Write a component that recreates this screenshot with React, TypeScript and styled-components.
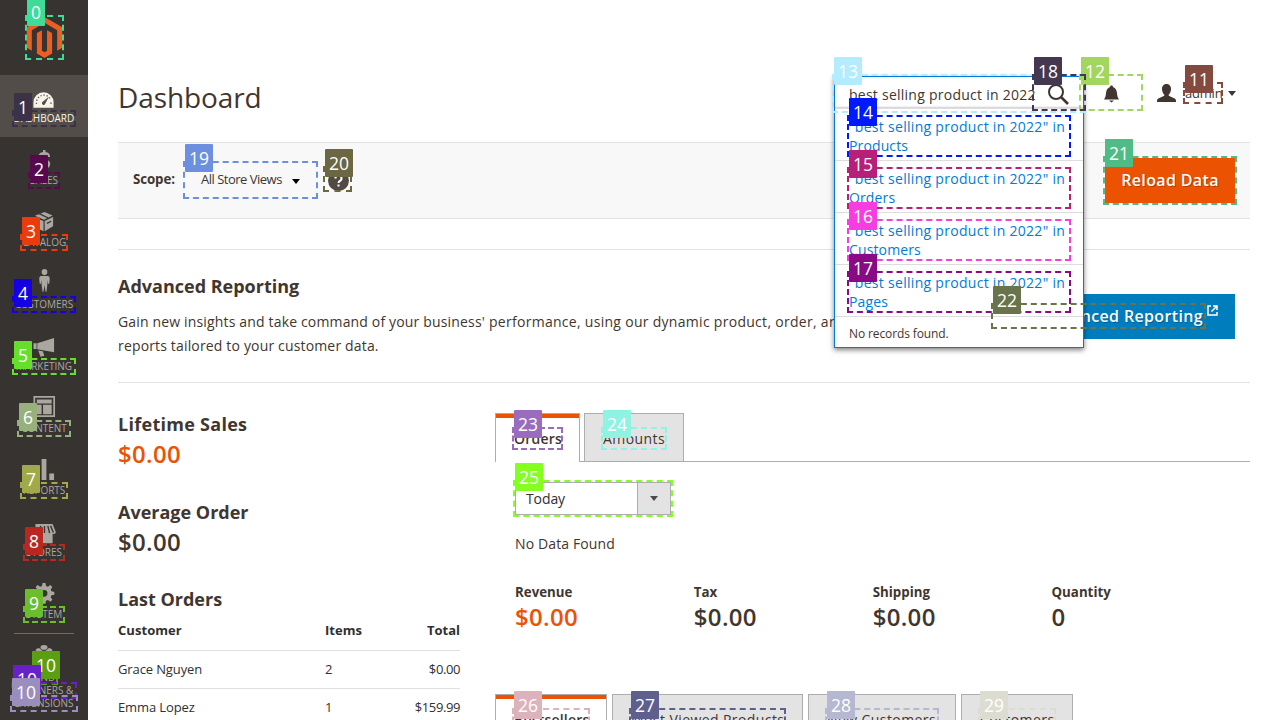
import React from "react";
import styled, { createGlobalStyle } from "styled-components";

const GlobalStyle = createGlobalStyle`
  * { box-sizing: border-box; }
  html, body { margin: 0; height: 720px; overflow: hidden; background: #fff; }
  body { font-family: "Open Sans", "Noto Sans", sans-serif; font-size: 14px; color: #41362f; }
`;

const Page = styled.div`
  position: relative;
  display: flex;
  width: 1280px;
  height: 720px;
  overflow: hidden;
`;

const Sidebar = styled.nav`
  flex: none;
  width: 88px;
  height: 720px;
  background: #373330;
  overflow: hidden;
`;

const LogoLink = styled.div`
  display: flex;
  justify-content: center;
  height: 75px;
  padding: 17px 0 0 1px;
`;

const MenuItem = styled.div<{ $active?: boolean; $lift?: number }>`
  display: flex;
  flex-direction: column;
  align-items: center;
  height: 62px;
  padding-top: ${(p) => 14 - (p.$lift ?? 0)}px;
  background: ${(p) => (p.$active ? "#524d49" : "transparent")};
  color: ${(p) => (p.$active ? "#f7f3eb" : "#aaa6a0")};
  svg { display: block; flex: none; margin-bottom: ${(p) => p.$lift ?? 0}px; fill: currentColor; }
`;

const MenuLabel = styled.span`
  font-size: 10px;
  line-height: 13px;
  text-align: center;
  text-transform: uppercase;
  white-space: pre-line;
`;

const MenuRule = styled.div`
  height: 1px;
  margin: 0 14px;
  background: #736963;
`;

const Main = styled.main`
  width: 1162px;
  padding-left: 30px;
`;

const Header = styled.header`
  display: flex;
  align-items: flex-start;
  height: 142px;
  padding-top: 76px;
`;

const Title = styled.h1`
  flex: 1;
  margin: 0;
  font-size: 28px;
  font-weight: 400;
  line-height: 42px;
  letter-spacing: -0.1px;
`;

const SearchSlot = styled.div`
  position: relative;
  z-index: 2;
  width: 250px;
  height: 33px;
`;

const SearchPanel = styled.div`
  position: absolute;
  top: 0;
  left: 0;
  width: 250px;
  height: 272px;
  border: 1px solid #007bdb;
  background: #fff;
  box-shadow: 0 2px 5px rgba(0, 0, 0, 0.5);
`;

const SearchField = styled.div`
  display: flex;
  align-items: center;
  height: 32px;
  padding: 4px 14px 0;
  border-bottom: 1px solid #ddd;
  box-shadow: inset 0 -2px 2px -1px #ccc;
  letter-spacing: 0.25px;
  white-space: nowrap;
  svg { flex: none; margin-left: auto; }
`;

const Suggestion = styled.div`
  height: 52px;
  padding: 8px 14px 0;
  border-bottom: 1px solid #ddd;
  color: #007bdb;
  line-height: 19px;
  letter-spacing: 0.29px;
`;

const AreaName = styled.span`
  letter-spacing: 0.13px;
`;

const EmptyNote = styled.div`
  padding: 8px 14px 0;
  font-size: 12px;
  line-height: 17px;
  letter-spacing: -0.12px;
`;

const BellSlot = styled.div`
  width: 55px;
  padding: 9px 0 0 19px;
`;

const Account = styled.div`
  display: flex;
  align-items: center;
  width: 111px;
  height: 33px;
  padding-left: 18px;
  font-size: 13px;
  letter-spacing: -0.2px;
  span { margin: 0 7px 0 9px; width: 36px; }
  svg:last-child { margin-top: 2px; }
`;

const ScopeBar = styled.section`
  display: flex;
  align-items: center;
  height: 77px;
  padding: 0 15px;
  border: solid #e3e3e3;
  border-width: 1px 0;
  background: #f8f8f8;
  font-size: 13px;
  b { width: 68px; padding-bottom: 3px; font-size: 13.3px; letter-spacing: -0.1px; }
`;

const ScopeSwitch = styled.div`
  display: flex;
  align-items: center;
  gap: 10px;
  width: 127px;
  padding-bottom: 3px;
  letter-spacing: -0.5px;
  white-space: nowrap;
  svg { margin-top: 5px; }
`;

const Button = styled.div<{ $blue?: boolean; $width: number }>`
  display: flex;
  align-items: center;
  justify-content: center;
  flex: none;
  width: ${(p) => p.$width}px;
  height: 45px;
  margin-left: auto;
  padding-bottom: 2px;
  background: ${(p) => (p.$blue ? "#007dbd" : "#eb5202")};
  color: #fff;
  font-size: 16px;
  font-weight: 600;
  letter-spacing: 0.35px;
  text-shadow: 1px 1px 0 rgba(0, 0, 0, 0.25);
  white-space: nowrap;
  svg { margin: -10px 0 0 4px; }
`;

const Advanced = styled.section`
  display: flex;
  height: 134px;
  margin-top: 30px;
  padding: 24px 15px 0 0;
  border: solid #e3e3e3;
  border-width: 1px 0;
`;

const AdvancedText = styled.div`
  width: 760px;
  p { margin: 11px 0 0; line-height: 24px; letter-spacing: 0.16px; white-space: pre; }
`;

const Wide = styled.span`
  letter-spacing: 0.29px;
`;

const ButtonOffset = styled.div`
  margin: 20px 0 0 auto;
`;

const Heading = styled.h2<{ $track?: number }>`
  margin: 0;
  font-size: 18px;
  font-weight: 700;
  line-height: 25px;
  letter-spacing: ${(p) => p.$track ?? 0}px;
`;

const Columns = styled.div`
  display: flex;
  gap: 35px;
  padding-top: 30px;
`;

const Summary = styled.div`
  flex: none;
  width: 342px;
  margin-top: -1px;
`;

const Stat = styled.div`
  height: 87.5px;
`;

const Amount = styled.div<{ $accent?: boolean }>`
  color: ${(p) => (p.$accent ? "#eb5202" : "#41362f")};
  font-size: 24px;
  font-weight: 600;
  line-height: 34px;
  letter-spacing: 0.3px;
`;

const OrderRow = styled.div<{ $head?: boolean }>`
  display: grid;
  grid-template-columns: 207px 1fr 1fr;
  align-items: center;
  height: ${(p) => (p.$head ? 39 : 38)}px;
  padding-bottom: ${(p) => (p.$head ? 3 : 2)}px;
  border-bottom: 1px solid #e0e0e0;
  color: #303030;
  font-size: 13px;
  font-weight: ${(p) => (p.$head ? 700 : 400)};
  letter-spacing: ${(p) => (p.$head ? "0.05px" : "-0.12px")};
  span:last-child { text-align: right; letter-spacing: ${(p) => (p.$head ? "0" : "-0.4px")}; }
`;

const Reports = styled.div`
  width: 755px;
`;

const Tabs = styled.div`
  display: flex;
  height: 49px;
  border-bottom: 1px solid #adadad;
`;

const Tab = styled.div<{ $active?: boolean; $width: number; $gap?: number }>`
  flex: none;
  width: ${(p) => p.$width}px;
  height: ${(p) => (p.$active ? 49 : 48)}px;
  margin-right: ${(p) => p.$gap ?? 5}px;
  padding: ${(p) => (p.$active ? 11 : 15)}px 0 0 18px;
  border: 1px solid #adadad;
  border-bottom: 0;
  background: ${(p) => (p.$active ? "#fff" : "#e3e3e3")};
  font-weight: ${(p) => (p.$active ? 600 : 400)};
  line-height: 20px;
  letter-spacing: ${(p) => (p.$active ? 0.2 : 0.42)}px;
  white-space: nowrap;
  &::before {
    content: "";
    display: ${(p) => (p.$active ? "block" : "none")};
    height: 4px;
    margin: -11px 0 11px -18px;
    background: #eb5202;
  }
`;

const TabBody = styled.div`
  height: 232px;
  padding: 20px 20px 0;
`;

const Select = styled.div`
  display: flex;
  width: 156px;
  height: 33px;
  border: 1px solid #adadad;
  color: #303030;
  span { flex: 1; padding-left: 10px; line-height: 31px; letter-spacing: -0.1px; }
`;

const SelectArrow = styled.div`
  display: flex;
  align-items: center;
  justify-content: center;
  width: 33px;
  border-left: 1px solid #adadad;
  background: #e3e3e3;
`;

const Empty = styled.div`
  margin-top: 19px;
  line-height: 20px;
  letter-spacing: 0.12px;
`;

const Totals = styled.div`
  display: grid;
  grid-template-columns: repeat(4, 178.85px);
  margin-top: 29px;
  b { display: block; font-size: 13.3px; line-height: 19px; }
  div div { margin-top: -1px; line-height: 32px; }
`;

const Mark = styled.div<{ $c: string; $x: number; $y: number; $w: number; $h: number }>`
  position: absolute;
  z-index: 5;
  left: ${(p) => p.$x}px;
  top: ${(p) => p.$y}px;
  width: ${(p) => p.$w}px;
  height: ${(p) => p.$h}px;
  border: 2px dashed ${(p) => p.$c};
`;

const MarkTag = styled.span<{ $c: string }>`
  position: absolute;
  left: 0;
  top: -19px;
  height: 28px;
  padding: 0 4px;
  border-radius: 1px;
  background: ${(p) => p.$c};
  color: #fff;
  font-size: 17.5px;
  line-height: 29px;
`;

const Caret = ({ w = 8, color = "#41362f" }: { w?: number; color?: string }) => (
  <svg width={w} height="5" viewBox="0 0 8 5" preserveAspectRatio="none">
    <path d="M0 0h8L4 5z" fill={color} />
  </svg>
);

const icons: Record<string, React.ReactNode> = {
  Dashboard: (
    <>
      <path d="M1 19.500V14a10.500 10.500 0 0 1 21 0v5.500z" />
      <path d="M4.200 15.500a7.800 7.800 0 0 1 14.800-4.500" fill="none" stroke="#524d49" strokeWidth="1.300" strokeDasharray="1.300 1.900" />
      <path d="M17 8l-7 5.800a2 2 0 0 0 2.900 2.500zM18.500 14h1.500v1.500h-1.500z" fill="#524d49" />
    </>
  ),
  Sales: <path d="M11 0h2.500v2.200c3.500.5 4.800 2.300 4.800 5h-3.800c0-2.600-4.500-2.600-4.500-.3 0 2.800 8.500 2.300 8.500 7.600 0 2.800-2 4.500-5 4.900v2.400H11v-2.400c-3.500-.4-5-2.300-5-5h3.800c0 2.800 4.800 2.700 4.800.3 0-2.900-8.500-2-8.500-7.700 0-2.500 1.900-4.300 4.900-4.800z" />,
  Catalog: (
    <>
      <path d="M2.500 5l10-4L21 4.800 12 9z" />
      <path d="M2.500 7l9 3.500V21l-9-4z" />
      <path d="M12.700 10.500L21.500 6.200V16l-8.800 5z" />
      <path d="M7 2.800l9.500 4.500M15 13l4.500-2.300" stroke="#373330" strokeWidth="1.400" fill="none" />
    </>
  ),
  Customers: <path d="M12.500 0a3 3.200 0 1 1 0 6.400 3 3.200 0 1 1 0-6.400zM9 7.300h7c1.500 0 2 1.500 2 3l-.5 5h-1.300l-.4-4-.4 6-.8 6.500h-1L12.500 17l-1 6.800h-1l-.9-6.500-.4-6-.4 4H7.500L7 10.300c0-1.500.5-3 2-3z" />,
  Marketing: <path d="M1 6.500h3.300v6H1zM5 6.500L22.500 1v15L5 12.800zM6 14l4.800.9L12.300 19.500l-4 1z" />,
  Content: (
    <>
      <path d="M1 1h22.500v22H1zm1.800 1.800v18.400h18.900V2.800z" fillRule="evenodd" />
      <path d="M4.500 4.800h15.500v4H4.500zM4.500 10.300h5V20h-5zM11 10.300h9V20h-9z" />
    </>
  ),
  Reports: <path d="M2 9h5v13H2zM9.500 0h5v22h-5zM17.500 15h5v7h-5z" />,
  Stores: (
    <>
      <path d="M3 1h18l3.300 8.500c0 2-1.800 2.700-3.300 1.500v10H4z" />
      <path d="M8.500 3l-1 7.500M12.500 3v7.500M16 3l1.800 7.500M18.800 3l3 7" stroke="#373330" strokeWidth="1.400" fill="none" />
    </>
  ),
  System: (
    <path
      fillRule="evenodd"
      d="M10.500 0h3l.6 3 2 .8 2.500-1.700 2.100 2.100L19 6.700l.8 2 3 .6v3l-3 .6-.8 2 1.700 2.500-2.100 2.100-2.500-1.700-2 .8-.6 3h-3l-.6-3-2-.8-2.500 1.700-2.100-2.100L5 14.900l-.8-2-3-.6v-3l3-.6.8-2-1.700-2.500 2.100-2.100 2.500 1.700 2-.8zM12 7.200a3.600 3.600 0 1 0 0 7.200 3.600 3.600 0 0 0 0-7.200z"
    />
  ),
  Partners: (
    <>
      <ellipse cx="12" cy="2.500" rx="3.600" ry="2.500" />
      <path d="M3 5.500C5 2.500 8 3 9 5.200c1.500 1.500 4.500 1.500 6 0C16 3 19 2.800 21 5.500L17 7.500H7zM3 9h18v10l-9 3-9-3z" />
    </>
  ),
};

const MenuIcon = ({ name }: { name: string }) => (
  <svg width="24" height="23" viewBox="0 0 24 24">
    {icons[name]}
  </svg>
);

const menu: [string, number][] = [
  ["Dashboard", 0],
  ["Sales", 1],
  ["Catalog", 2],
  ["Customers", 6],
  ["Marketing", 0],
  ["Content", 4],
  ["Reports", 2],
  ["Stores", 0],
  ["System", 2],
];

type MarkRow = [string, number, number, number, number, string];
const marks: MarkRow[] = [
  ["0", 25, 15, 39, 45, "#3ddc97"],
  ["1", 12, 110, 64, 17, "#3b3247"],
  ["2", 28, 172, 32, 17, "#560a4d"],
  ["3", 20, 234, 48, 17, "#ea3b0c"],
  ["4", 12, 296, 64, 17, "#1400e0"],
  ["5", 12, 358, 64, 17, "#66df2b"],
  ["6", 17, 420, 54, 17, "#98b07b"],
  ["7", 20, 482, 48, 17, "#a0aa4a"],
  ["8", 23, 544, 42, 17, "#b92820"],
  ["9", 23, 606, 42, 17, "#6abd2c"],
  ["10", 30, 668, 28, 17, "#5a9e14"],
  ["10", 11, 682, 66, 17, "#6820c8"],
  ["10", 10, 695, 68, 17, "#9a8fbc"],
  ["11", 1183, 82, 40, 22, "#854a3f"],
  ["12", 1079, 74, 64, 37, "#a3d65f"],
  ["13", 832, 74, 254, 39, "#b3ecff"],
  ["14", 847, 115, 224, 42, "#0019ff"],
  ["15", 847, 167, 224, 42, "#b81f78"],
  ["16", 847, 219, 224, 42, "#f73de0"],
  ["17", 847, 271, 224, 42, "#8a0a85"],
  ["18", 1032, 74, 54, 37, "#433850"],
  ["19", 183, 161, 135, 38, "#6c8fdf"],
  ["20", 323, 166, 29, 26, "#6a6742"],
  ["21", 1103, 156, 134, 49, "#4fbb85"],
  ["22", 991, 303, 215, 26, "#69734c"],
  ["23", 512, 427, 51, 23, "#9a6cbd"],
  ["24", 601, 427, 66, 23, "#8ff3e4"],
  ["25", 513, 480, 160, 37, "#85ff22"],
  ["26", 512, 708, 78, 23, "#dcb2bc"],
  ["27", 629, 708, 157, 23, "#5f5f8d"],
  ["28", 825, 708, 114, 23, "#b5b8d0"],
  ["29", 978, 708, 78, 23, "#dcddd0"],
];

export default function App() {
  return (
    <Page>
      <GlobalStyle />
      <Sidebar>
        <LogoLink>
          <svg width="41" height="41" viewBox="0 0 24 24" fill="#eb5f25">
            <path d="M12 24l-4.455-2.572v-12l2.970-1.715v12.001l1.485.902 1.485-.902V7.713l2.971 1.715v12L12 24zM22.391 6v12l-2.969 1.714V7.713L12 3.430 4.574 7.713v12.001L1.609 18V6L12 0l10.391 6z" />
          </svg>
        </LogoLink>
        {menu.map(([name, lift], i) => (
          <MenuItem key={name} $active={i === 0} $lift={lift}>
            <MenuIcon name={name} />
            <MenuLabel>{name}</MenuLabel>
          </MenuItem>
        ))}
        <MenuRule />
        <MenuItem $lift={3}>
          <MenuIcon name="Partners" />
          <MenuLabel>{"Find\nPartners &\nExtensions"}</MenuLabel>
        </MenuItem>
      </Sidebar>

      <Main>
        <Header>
          <Title>Dashboard</Title>
          <SearchSlot>
            <SearchPanel>
              <SearchField>
                best selling product in 2022
                <svg width="22" height="22" viewBox="0 0 22 22" fill="none" stroke="#41362f">
                  <circle cx="9" cy="8" r="7" strokeWidth="2" />
                  <path d="M14 13l7 7" strokeWidth="2.600" />
                </svg>
              </SearchField>
              {["Products", "Orders", "Customers", "Pages"].map((area) => (
                <Suggestion key={area}>
                  "best selling product in 2022" in <AreaName>{area}</AreaName>
                </Suggestion>
              ))}
              <EmptyNote>No records found.</EmptyNote>
            </SearchPanel>
          </SearchSlot>
          <BellSlot>
            <svg width="17" height="18" viewBox="0 0 16 18" fill="#41362f">
              <path d="M8 .5c1 0 1.500.6 1.500 1.500C12 3 13.200 5.200 13.500 8c.2 3 .7 4.500 2 6.500H.5c1.300-2 1.800-3.500 2-6.500C2.800 5.200 4 3 6.500 2 6.500 1.100 7 .5 8 .5zM5.500 15.500h5L8 17.500z" />
            </svg>
          </BellSlot>
          <Account>
            <svg width="19" height="18" viewBox="0 0 19 18" fill="#41362f">
              <path d="M9.500 0C12 0 14 1.500 14 5c0 2.500-1 4.500-2.300 5.800v1l6 2.700c1 .5 1.300 1 1.300 3.500H0c0-2.500.3-3 1.300-3.500l6-2.700v-1C6 9.500 5 7.500 5 5c0-3.500 2-5 4.500-5z" />
            </svg>
            <span>admin</span>
            <Caret />
          </Account>
        </Header>

        <ScopeBar>
          <b>Scope:</b>
          <ScopeSwitch>
            All Store Views
            <Caret color="#000" />
          </ScopeSwitch>
          <svg width="22" height="22" viewBox="0 0 22 22">
            <circle cx="10.500" cy="10.500" r="10.500" fill="#514943" />
            <path d="M7.500 8.500a3 3 0 1 1 4.500 2.300c-1 .6-1.500 1-1.500 2.200M10.500 14.500v2" fill="none" stroke="#fff" strokeWidth="2" />
          </svg>
          <Button $width={130}>Reload Data</Button>
        </ScopeBar>

        <Advanced>
          <AdvancedText>
            <Heading>Advanced Reporting</Heading>
            <p>
              Gain new insights and take command of your business'
              <Wide>{" performance, using our dynamic product, order, and customer"}</Wide>
              {"\nreports tailored to your customer data."}
            </p>
          </AdvancedText>
          <ButtonOffset>
            <Button $blue $width={259}>
              Go to Advanced Reporting
              <svg width="11" height="11" viewBox="0 0 11 11" fill="none" stroke="#fff" strokeWidth="1.500">
                <path d="M4 1H1v9h9V7M6 1h4v4M10 1L4.500 6.500" />
              </svg>
            </Button>
          </ButtonOffset>
        </Advanced>

        <Columns>
          <Summary>
            <Stat>
              <Heading $track={0.28}>Lifetime Sales</Heading>
              <Amount $accent>$0.00</Amount>
            </Stat>
            <Stat>
              <Heading>Average Order</Heading>
              <Amount>$0.00</Amount>
            </Stat>
            <Heading>Last Orders</Heading>
            <OrderRow $head><span>Customer</span><span>Items</span><span>Total</span></OrderRow>
            <OrderRow><span>Grace Nguyen</span><span>2</span><span>$0.00</span></OrderRow>
            <OrderRow><span>Emma Lopez</span><span>1</span><span>$159.99</span></OrderRow>
          </Summary>

          <Reports>
            <Tabs>
              <Tab $active $width={85} $gap={4}>Orders</Tab>
              <Tab $width={100}>Amounts</Tab>
            </Tabs>
            <TabBody>
              <Select>
                <span>Today</span>
                <SelectArrow><Caret color="#514943" /></SelectArrow>
              </Select>
              <Empty>No Data Found</Empty>
              <Totals>
                <div><b>Revenue</b><Amount $accent>$0.00</Amount></div>
                <div><b>Tax</b><Amount>$0.00</Amount></div>
                <div><b>Shipping</b><Amount>$0.00</Amount></div>
                <div><b>Quantity</b><Amount>0</Amount></div>
              </Totals>
            </TabBody>
            <Tabs>
              <Tab $active $width={112}>Bestsellers</Tab>
              <Tab $width={191}>Most Viewed Products</Tab>
              <Tab $width={148}>New Customers</Tab>
              <Tab $width={112}>Customers</Tab>
            </Tabs>
          </Reports>
        </Columns>
      </Main>

      {marks.map(([label, x, y, w, h, c], i) => (
        <Mark key={i} $x={x} $y={y} $w={w} $h={h} $c={c}>
          <MarkTag $c={c}>{label}</MarkTag>
        </Mark>
      ))}
    </Page>
  );
}
